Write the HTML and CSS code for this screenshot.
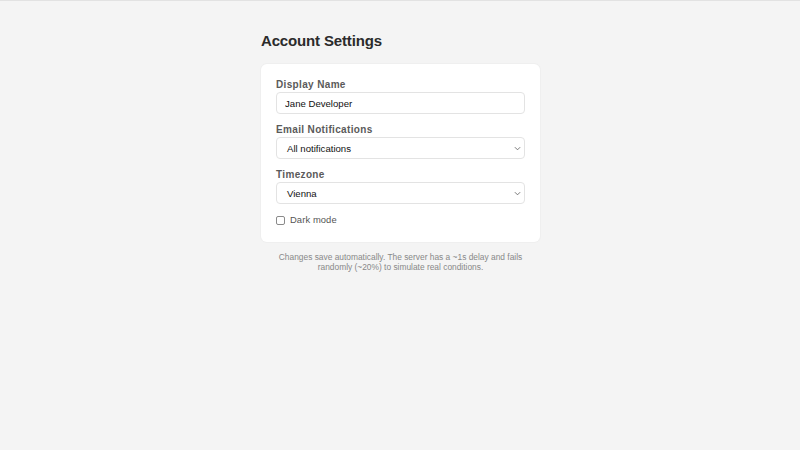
FILE: index.html
```html
<!DOCTYPE html>
<html>
<head>
<meta charset="utf-8">
<link rel="stylesheet" href="styles.css">
</head>
<body>
<div class="topline"></div>
<main class="wrap">
  <h1 class="title">Account Settings</h1>
  <section class="card">
    <div class="field">
      <label class="label">Display Name</label>
      <input class="input" type="text" value="Jane Developer">
    </div>
    <div class="field">
      <label class="label">Email Notifications</label>
      <div class="select">
        <span>All notifications</span>
        <svg class="chev" viewBox="0 0 8 5" width="7" height="5"><path d="M1 1 L4 4 L7 1" fill="none" stroke="#666" stroke-width="1"/></svg>
      </div>
    </div>
    <div class="field">
      <label class="label">Timezone</label>
      <div class="select">
        <span>Vienna</span>
        <svg class="chev" viewBox="0 0 8 5" width="7" height="5"><path d="M1 1 L4 4 L7 1" fill="none" stroke="#666" stroke-width="1"/></svg>
      </div>
    </div>
    <label class="check">
      <span class="box"></span>
      <span>Dark mode</span>
    </label>
  </section>
  <p class="note">Changes save automatically. The server has a ~1s delay and fails randomly (~20%) to simulate real conditions.</p>
</main>
</body>
</html>
```
FILE: styles.css
```css
html, body {
  margin: 0;
  padding: 0;
  background: #f4f4f4;
  font-family: "Liberation Sans", Arial, sans-serif;
  height: 100%;
}
.topline {
  height: 1px;
  background: #e2e2e2;
}
.wrap {
  width: 280px;
  margin: 0 auto;
  padding-top: 31px;
  display: flex;
  flex-direction: column;
}
.title {
  margin: 0 0 15px 1px;
  font-size: 15px;
  line-height: 17px;
  font-weight: 700;
  color: #2b2b2b;
  letter-spacing: -0.15px;
}
.card {
  margin-left: 1px;
  background: #fff;
  border-radius: 6px;
  padding: 15px 15px 16px 15px;
  display: flex;
  flex-direction: column;
  gap: 10px;
  box-shadow: 0 0 0 1px #efefef;
}
.field {
  display: flex;
  flex-direction: column;
  gap: 1px;
}
.label {
  font-size: 10px;
  line-height: 12px;
  font-weight: 700;
  color: #5a5a5a;
  letter-spacing: 0.35px;
}
.input, .select {
  box-sizing: border-box;
  height: 22px;
  border: 1px solid #e3e3e3;
  border-radius: 4px;
  padding: 0 8px;
  font-family: "Liberation Sans", Arial, sans-serif;
  font-size: 9.6px;
  color: #111;
  background: #fff;
  width: 100%;
  outline: none;
  margin: 0;
}
.select {
  display: flex;
  align-items: center;
  justify-content: space-between;
  padding: 0 3px 0 10px;
}
.chev {
  display: block;
}
.check {
  display: flex;
  align-items: center;
  gap: 5px;
  font-size: 9.4px;
  line-height: 12px;
  color: #555;
  letter-spacing: 0.1px;
}
.box {
  width: 7px;
  height: 7px;
  border: 1px solid #8a8a8a;
  border-radius: 2px;
  background: #fff;
}
.note {
  margin: 10px 0 0 1px;
  text-align: center;
  font-size: 8.4px;
  line-height: 10px;
  color: #888;
}
```
